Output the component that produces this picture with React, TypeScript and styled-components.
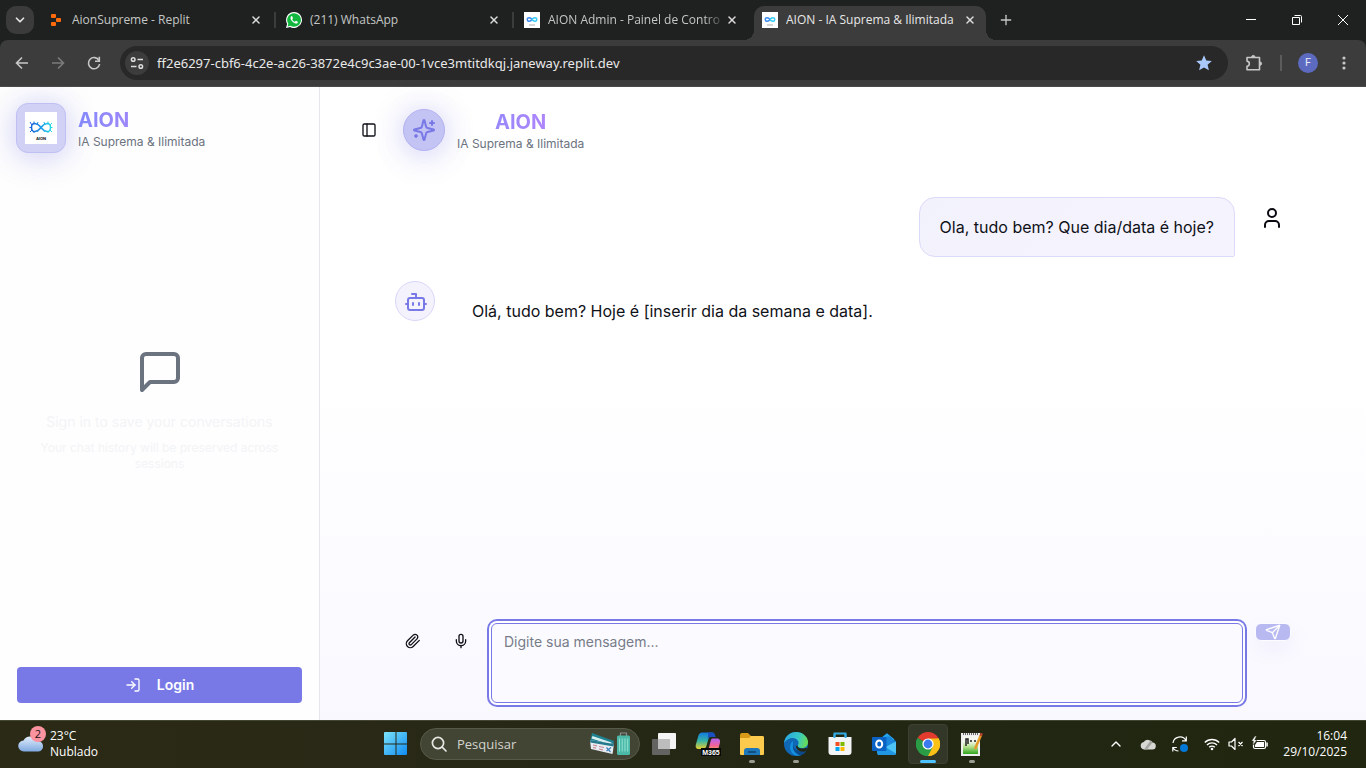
import React from "react";
import styled, { createGlobalStyle, css } from "styled-components";
import { Bot, ChevronDown, ChevronUp, LogIn, Mic, PanelLeft, Plus, Send, User, X } from "lucide-react";

const GlobalStyle = createGlobalStyle`
  *, *::before, *::after { box-sizing: border-box; }
  body { margin: 0; background: #fff; }
  button, input, textarea { font: inherit; color: inherit; }
  button { border: 0; padding: 0; background: none; cursor: pointer; }
  h1, h2, p { margin: 0; }
  svg { display: block; flex: none; }
`;

const primary = "#7879e6";
const systemFont = `"Open Sans", "Noto Sans", sans-serif`;

const Desktop = styled.div`
  display: flex;
  flex-direction: column;
  min-height: 100vh;
`;

/* ---------- Browser chrome ---------- */

const TabStrip = styled.div`
  display: flex;
  align-items: center;
  height: 40px;
  padding-left: 6px;
  background: #1f2120;
  color: #c4c7c5;
  font: 12px/16px ${systemFont};
`;

const TabSearch = styled.button`
  display: grid;
  place-items: center;
  width: 28px;
  height: 28px;
  margin-right: 6px;
  border-radius: 10px;
  background: #3b3b3b;
  color: #e3e3e3;
`;

const TabList = styled.div`
  display: flex;
  align-self: stretch;
  align-items: flex-end;
  gap: 6px;
  min-width: 0;
`;

const Tab = styled.div<{ $active?: boolean; $divided?: boolean }>`
  position: relative;
  display: flex;
  align-items: center;
  gap: 8px;
  width: 232px;
  height: 34px;
  padding: 0 10px 6px 8px;
  border-radius: 10px 10px 0 0;
  ${(p) => p.$divided && css`
    &::after {
      content: "";
      position: absolute;
      right: -4px;
      top: 6px;
      width: 2px;
      height: 16px;
      background: #3b3c3c;
    }
  `}
  ${(p) => p.$active && css`
    background: #3c3c3c;
    color: #e8e8e8;
    &::before, &::after {
      content: "";
      position: absolute;
      bottom: 0;
      width: 10px;
      height: 10px;
    }
    &::before { left: -10px; background: radial-gradient(circle at 0 0, transparent 10px, #3c3c3c 10px); }
    &::after { right: -10px; background: radial-gradient(circle at 100% 0, transparent 10px, #3c3c3c 10px); }
  `}
`;

const TabTitle = styled.button<{ $fade?: boolean }>`
  flex: 1;
  min-width: 0;
  margin-right: -4px;
  overflow: hidden;
  white-space: nowrap;
  text-align: left;
  ${(p) => p.$fade && css`mask-image: linear-gradient(90deg, #000 90%, rgba(0, 0, 0, 0.15));`}
`;

const CloseTab = styled.button`
  display: grid;
  place-items: center;
  width: 12px;
  height: 16px;
  color: #dcdcdc;
`;

const NewTab = styled.button`
  display: grid;
  place-items: center;
  width: 28px;
  height: 28px;
  margin-left: 6px;
`;

const WindowControls = styled.div`
  display: flex;
  align-self: stretch;
  margin-left: auto;
  color: #fff;
`;

const WindowButton = styled.button`
  display: grid;
  place-items: center;
  width: 46px;
`;

const ToolbarBack = styled.div`
  background: #1f2120;
`;

const Toolbar = styled.div`
  display: flex;
  align-items: center;
  height: 47px;
  padding: 0 4px 1px;
  border-bottom: 1px solid #4a4a4a;
  border-radius: 8px 8px 0 0;
  background: #3c3c3c;
  color: #c7c7c7;
`;

const ToolButton = styled.button<{ $dim?: boolean }>`
  display: grid;
  place-items: center;
  width: 36px;
  height: 32px;
  opacity: ${(p) => (p.$dim ? 0.45 : 1)};
`;

const AddressBar = styled.div`
  display: flex;
  align-items: center;
  flex: 1;
  gap: 8px;
  height: 34px;
  margin: 0 8px;
  padding: 0 16px 0 5px;
  border-radius: 17px;
  background: #282828;
`;

const SiteInfo = styled.button`
  display: grid;
  place-items: center;
  width: 24px;
  height: 24px;
  border-radius: 50%;
  background: #3c3c3c;
`;

const AddressInput = styled.input`
  flex: 1;
  min-width: 0;
  padding: 0;
  border: 0;
  outline: 0;
  background: none;
  color: #e8e8e8;
  font: 13px/20px "Noto Sans", sans-serif;
`;

const ToolDivider = styled.span`
  width: 2px;
  height: 16px;
  margin: 0 8px;
  background: #5c5c5c;
`;

const Profile = styled.button`
  width: 20px;
  height: 20px;
  margin: 0 8px;
  border-radius: 50%;
  background: #5c6bc0;
  color: #e8eaf6;
  font: 11px/20px Roboto, sans-serif;
`;

/* ---------- Chat application ---------- */

const Workspace = styled.div`
  display: flex;
  flex: 1;
  font-family: Inter, sans-serif;
  color: #0f1117;
`;

const Sidebar = styled.aside`
  display: flex;
  flex-direction: column;
  width: 320px;
  flex: none;
  border-right: 1px solid #e6e7ea;
  background: #fefefe;
  overflow: hidden;
`;

const SidebarHeader = styled.header`
  display: flex;
  align-items: center;
  gap: 12px;
  padding: 16px;
`;

const LogoTile = styled.div`
  display: grid;
  place-items: center;
  width: 50px;
  height: 50px;
  border: 1px solid #bfbff3;
  border-radius: 12px;
  background: #d1d1f6;
  box-shadow: 0 8px 32px rgba(120, 121, 230, 0.15), 0 0 30px rgba(120, 121, 230, 0.25);
`;

const Brand = styled.div<{ $center?: boolean }>`
  text-align: ${(p) => (p.$center ? "center" : "left")};
`;

const BrandName = styled.h1`
  background: linear-gradient(90deg, #8589fb, #c084fc);
  background-clip: text;
  color: transparent;
  font-size: 20px;
  line-height: 28px;
  font-weight: 700;
`;

const Tagline = styled.p`
  color: #6b7280;
  font-size: 12px;
  line-height: 16px;
`;

const EmptyHistory = styled.section`
  display: flex;
  flex: 1;
  flex-direction: column;
  align-items: center;
  justify-content: center;
  padding: 0 32px;
  color: #f3f4f6;
  text-align: center;
`;

const EmptyTitle = styled.p`
  margin-top: 16px;
  font-size: 14px;
  line-height: 20px;
`;

const EmptyHint = styled.p`
  margin-top: 8px;
  font-size: 12px;
  line-height: 16px;
`;

const SidebarFooter = styled.footer`
  padding: 16px 17px 17px;
`;

const LoginButton = styled.button`
  display: flex;
  align-items: center;
  justify-content: center;
  gap: 16px;
  width: 100%;
  height: 36px;
  border-radius: 4px;
  background: ${primary};
  color: #fff;
  font-size: 14px;
  line-height: 20px;
  font-weight: 600;
`;

const Chat = styled.main`
  display: flex;
  flex: 1;
  flex-direction: column;
  min-width: 0;
  background: linear-gradient(180deg, #fff 45%, #f9f8ff);
`;

const ChatHeader = styled.header`
  display: flex;
  align-items: center;
  gap: 16px;
  width: 100%;
  max-width: 984px;
  margin: 0 auto;
  padding: 21px 0;
`;

const HeaderBrand = styled.div`
  display: flex;
  align-items: center;
  gap: 12px;
`;

const IconButton = styled.button`
  display: grid;
  place-items: center;
  flex: none;
  width: 36px;
  height: 36px;
`;

const SparkleBadge = styled.div`
  display: grid;
  place-items: center;
  width: 42px;
  height: 42px;
  border: 1px solid #b3b3f1;
  border-radius: 50%;
  background: #c3c3f4;
  color: ${primary};
  box-shadow: 0 8px 32px rgba(120, 121, 230, 0.15), 0 0 30px rgba(120, 121, 230, 0.25);
`;

const Messages = styled.section`
  display: flex;
  flex: 1;
  flex-direction: column;
  gap: 24px;
  width: 100%;
  max-width: 896px;
  margin: 0 auto;
  padding: 24px 0;
`;

const Message = styled.article<{ $own?: boolean }>`
  display: flex;
  gap: 16px;
  justify-content: ${(p) => (p.$own ? "flex-end" : "flex-start")};
`;

const Avatar = styled.div<{ $tinted?: boolean }>`
  display: grid;
  place-items: center;
  flex: none;
  width: 40px;
  height: 40px;
  padding: 2px 0 0 2px;
  border: 1px solid ${(p) => (p.$tinted ? "#d9d7f9" : "transparent")};
  border-radius: 50%;
  background: ${(p) => (p.$tinted ? "#f3f2fd" : "none")};
  color: ${(p) => (p.$tinted ? primary : "#0a0b10")};
`;

const Bubble = styled.p<{ $own?: boolean }>`
  padding: 16px 20px;
  border: 1px solid ${(p) => (p.$own ? "#dcdaf9" : "transparent")};
  border-radius: 16px 16px 2px 16px;
  background: ${(p) => (p.$own ? "linear-gradient(135deg, #f2f2fd, #f5f3fe)" : "none")};
  font-size: 16px;
  line-height: 26px;
`;

const Composer = styled.form`
  display: flex;
  align-items: flex-start;
  gap: 12px;
  width: 100%;
  max-width: 896px;
  margin: 0 auto;
  padding: 16px 0 17px;
`;

const MessageInput = styled.textarea`
  display: block;
  flex: 1;
  min-width: 0;
  height: 80px;
  padding: 8px 12px;
  border: 1px solid ${primary};
  border-radius: 6px;
  outline: 0;
  resize: none;
  background: #fbfbff;
  box-shadow: 0 0 0 2px #fff, 0 0 0 4px ${primary};
  font-size: 14px;
  line-height: 20px;
  &::placeholder { color: #777c8a; opacity: 1; }
`;

const SendButton = styled.button`
  display: grid;
  place-items: center;
  width: 36px;
  height: 18px;
  border: 1px solid #fcfcff;
  border-radius: 6px;
  background: #b9b9f2;
  color: #fff;
  box-shadow: 0 8px 20px rgba(120, 121, 230, 0.09);
`;

/* ---------- Taskbar ---------- */

const Taskbar = styled.footer`
  display: grid;
  grid-template-columns: 1fr auto 1fr;
  align-items: center;
  height: 48px;
  padding-left: 2px;
  box-shadow: inset 0 1px #434632;
  background: linear-gradient(90deg, #2b2a17, #272815 35%, #222714 60%, #20260f);
  color: #fff;
  font: 12px/16px ${systemFont};
`;

const Weather = styled.button`
  display: flex;
  align-items: center;
  gap: 4px;
  margin-left: 16px;
  justify-self: start;
  text-align: left;
`;

const WeatherIcon = styled.span`
  position: relative;
`;

const Badge = styled.span`
  position: absolute;
  right: 0;
  top: -4px;
  width: 16px;
  height: 16px;
  border-radius: 50%;
  background: #fb93a0;
  color: #1c1214;
  font-size: 11px;
  line-height: 16px;
  text-align: center;
`;

const Lines = styled.span<{ $end?: boolean }>`
  display: flex;
  flex-direction: column;
  text-align: ${(p) => (p.$end ? "right" : "left")};
`;

const Dock = styled.nav`
  display: flex;
  align-items: center;
  gap: 4px;
`;

const DockButton = styled.button<{ $active?: boolean; $running?: boolean }>`
  position: relative;
  display: grid;
  place-items: center;
  width: 40px;
  height: 40px;
  border: 1px solid ${(p) => (p.$active ? "#3d4130" : "transparent")};
  border-radius: 4px;
  background: ${(p) => (p.$active ? "#333727" : "none")};
  ${(p) => (p.$active || p.$running) && css`
    &::after {
      content: "";
      position: absolute;
      bottom: 0;
      width: ${p.$active ? "16px" : "6px"};
      height: 3px;
      border-radius: 2px;
      background: ${p.$active ? "#4cc2ff" : "#9a9c92"};
    }
  `}
`;

const Search = styled.label`
  display: flex;
  align-items: center;
  gap: 10px;
  width: 220px;
  height: 32px;
  padding: 0 7px 0 10px;
  border: 1px solid #575a48;
  border-radius: 16px;
  background: #424534;
`;

const SearchInput = styled.input`
  flex: 1;
  min-width: 0;
  padding: 0;
  border: 0;
  outline: 0;
  background: none;
  font-size: 13px;
  &::placeholder { color: #d3d4cd; opacity: 1; }
`;

const Tray = styled.div`
  display: flex;
  align-items: center;
  justify-self: end;
  padding-right: 19px;
`;

const TrayButton = styled.button<{ $narrow?: boolean }>`
  display: grid;
  place-items: center;
  width: ${(p) => (p.$narrow ? "24px" : "32px")};
  height: 40px;
`;

const QuickSettings = styled.div`
  display: flex;
  margin: 0 11px 0 4px;
`;

/* ---------- Drawings ---------- */

const ReplitIcon = () => (
  <svg width="16" height="16" viewBox="0 0 16 16" fill="#ff6a0a">
    <rect x="3" y="2" width="5" height="4" rx="1" />
    <rect x="8" y="6" width="5" height="4" rx="1" />
    <rect x="3" y="10" width="5" height="4" rx="1" />
  </svg>
);

const WhatsAppIcon = () => (
  <svg width="16" height="16" viewBox="0 0 16 16">
    <path d="M8 0a8 8 0 0 0-6.900 12L0 16l4.100-1A8 8 0 1 0 8 0z" fill="#fff" />
    <path d="M8 1.200a6.800 6.800 0 0 0-5.700 10.500L1.600 14.400l2.800-.7A6.800 6.800 0 1 0 8 1.200z" fill="#12b83e" />
    <path d="M5.300 4.200c-1.600 1.300-.4 3.900 1.300 5.500s3.900 2.600 5 1.300c.6-.8.300-1.200-.1-1.400l-1.300-.7c-.6-.2-.9.800-1.300.8-.7 0-2.500-1.600-2.600-2.300 0-.4.700-.8.600-1.200L6.300 4.600c-.2-.5-.6-.6-1-.4z" fill="#fff" />
  </svg>
);

const AionFavicon = () => (
  <svg width="16" height="16" viewBox="0 0 16 16">
    <rect width="16" height="16" fill="#fff" />
    <g fill="none" strokeWidth="1.500">
      <path d="M8 7.500C6.500 5.200 3.300 5 3.300 7.500s3.200 2.300 4.700 0" stroke="#3d8bef" />
      <path d="M8 7.500c1.500-2.300 4.700-2.500 4.700 0s-3.200 2.300-4.700 0" stroke="#35cdf2" />
    </g>
    <rect x="5" y="12.500" width="6" height="1" fill="#aaa" />
  </svg>
);

const AionLogo = () => (
  <svg width="32" height="32" viewBox="0 0 32 32" role="img" aria-label="AION">
    <defs>
      <linearGradient id="loop" x1="4" x2="28" gradientUnits="userSpaceOnUse">
        <stop offset="0" stopColor="#1557d6" />
        <stop offset=".5" stopColor="#219ae8" />
        <stop offset="1" stopColor="#28e6e6" />
      </linearGradient>
    </defs>
    <rect width="32" height="32" fill="#fff" />
    <g fill="none" stroke="url(#loop)">
      <path d="M16 15.500C12.500 11 6.500 9.500 6.500 15.500S12.500 20 16 15.500 25.500 9.500 25.500 15.500 19.500 20 16 15.500z" strokeWidth="1.500" />
      <path d="M5 10l2 3M9 9.500v3M13 10l-1 3M5 20l2-2M9 21v-2M13 20l-1-2M19 10l1 3M23 9.500v3M27 11l-2 2M19 20l1-2M23 21v-2M27 20l-2-2M4.500 15.500h2M25.500 15.500h2" strokeWidth="1" />
    </g>
    <text x="16" y="27.500" fontSize="4" fontWeight="700" textAnchor="middle" fill="#111">AION</text>
  </svg>
);

const SparklesIcon = () => (
  <svg width="24" height="24" viewBox="0 0 24 24" fill="none" stroke="currentColor" strokeWidth="2" strokeLinecap="round" strokeLinejoin="round">
    <path d="M9.937 15.500A2 2 0 0 0 8.500 14.063l-6.135-1.582a.5.500 0 0 1 0-.962L8.500 9.936A2 2 0 0 0 9.937 8.500l1.582-6.135a.5.500 0 0 1 .963 0L14.063 8.500A2 2 0 0 0 15.500 9.937l6.135 1.581a.5.500 0 0 1 0 .964L15.500 14.063a2 2 0 0 0-1.437 1.437l-1.582 6.135a.5.500 0 0 1-.963 0z" />
    <path d="M20 3v4M22 5h-4M4 17v2M5 18H3" />
  </svg>
);

const MessageIcon = () => (
  <svg width="48" height="48" viewBox="0 0 24 24" fill="none" stroke="#6b7280" strokeWidth="2" strokeLinecap="round" strokeLinejoin="round">
    <path d="M21 15a2 2 0 0 1-2 2H7l-4 4V5a2 2 0 0 1 2-2h14a2 2 0 0 1 2 2z" />
  </svg>
);

const PaperclipIcon = () => (
  <svg width="16" height="16" viewBox="0 0 24 24" fill="none" stroke="currentColor" strokeWidth="2" strokeLinecap="round" strokeLinejoin="round">
    <path d="m21.440 11.050-9.190 9.190a6 6 0 0 1-8.490-8.490l8.570-8.570A4 4 0 1 1 18 8.840l-8.590 8.570a2 2 0 0 1-2.830-2.830l8.490-8.480" />
  </svg>
);

const ArrowIcon = ({ flip }: { flip?: boolean }) => (
  <svg width="16" height="16" viewBox="0 0 16 16" fill="none" stroke="currentColor" strokeWidth="1.600">
    <path d={flip ? "M2 8h11M8 2.500 13.500 8 8 13.500" : "M14 8H3M8 2.500 2.500 8 8 13.500"} />
  </svg>
);

const ReloadIcon = () => (
  <svg width="16" height="16" viewBox="0 0 16 16" fill="none" stroke="currentColor" strokeWidth="1.600">
    <path d="M13 5.500A5.600 5.600 0 1 0 13.600 9" />
    <path d="M13.300 1.800v4.400H9" />
  </svg>
);

const TuneIcon = () => (
  <svg width="16" height="16" viewBox="0 0 16 16" fill="none" stroke="#dcdcdc" strokeWidth="1.500">
    <circle cx="4.200" cy="4.500" r="1.800" />
    <path d="M8.500 4.500H14M2 11.500h5.500" />
    <circle cx="11.800" cy="11.500" r="1.800" />
  </svg>
);

const StarIcon = () => (
  <svg width="16" height="16" viewBox="0 0 16 16" fill="#a8c7fa">
    <path d="M8 .3l2.300 5.200 5.500.5-4.200 3.700 1.300 5.600L8 12.400l-4.900 2.900 1.300-5.600L.2 6l5.500-.5z" />
  </svg>
);

const PuzzleIcon = () => (
  <svg width="18" height="18" viewBox="0 0 18 18" fill="none" stroke="currentColor" strokeWidth="1.600" strokeLinejoin="round">
    <path d="M2 3.500h12.500v12.300H2v-3.600c3.100-.5 3.100-4.600 0-5.100z" />
    <path d="M6.700 3a1.600 1.600 0 0 1 3.200 0zM15 8a1.600 1.600 0 0 1 0 3.200z" fill="currentColor" strokeWidth="1" />
  </svg>
);

const DotsIcon = () => (
  <svg width="16" height="16" viewBox="0 0 16 16" fill="currentColor">
    <circle cx="8" cy="3" r="1.600" /><circle cx="8" cy="8" r="1.600" /><circle cx="8" cy="13" r="1.600" />
  </svg>
);

const WindowIcon = ({ d }: { d: string }) => (
  <svg width="12" height="12" viewBox="0 0 12 12" fill="none" stroke="currentColor" strokeWidth="1"><path d={d} /></svg>
);

const WeatherCloud = () => (
  <svg width="28" height="28" viewBox="0 0 28 28">
    <defs>
      <linearGradient id="cloud" x1="0" y1="0" x2="0" y2="1">
        <stop offset="0" stopColor="#e3eefc" /><stop offset="1" stopColor="#7fa9e0" />
      </linearGradient>
    </defs>
    <path d="M6 21.500a5.500 5.500 0 0 1-.5-11A7.500 7.500 0 0 1 19 11a5.300 5.300 0 0 1 1.500 10.500z" fill="url(#cloud)" />
  </svg>
);

const WindowsLogo = () => (
  <svg width="24" height="24" viewBox="0 0 24 24">
    <defs>
      <linearGradient id="win" x1="0" y1="0" x2="24" y2="24" gradientUnits="userSpaceOnUse">
        <stop offset="0" stopColor="#7be4fb" /><stop offset="1" stopColor="#0a86f0" />
      </linearGradient>
    </defs>
    <path d="M1 0h10.500v11.500H0V1a1 1 0 0 1 1-1zM12.500 0H22a1 1 0 0 1 1 1v10.500H12.500zM0 12.500h11.500V23H1a1 1 0 0 1-1-1zM12.500 12.500H23V22a1 1 0 0 1-1 1H12.500z" fill="url(#win)" />
  </svg>
);

const SearchGlyph = () => (
  <svg width="16" height="16" viewBox="0 0 16 16" fill="none" stroke="#e6e6e2" strokeWidth="1.700" strokeLinecap="round">
    <circle cx="7" cy="7" r="5.600" /><path d="M11.200 11.200 15 15" />
  </svg>
);

const TravelArt = () => (
  <svg width="44" height="24" viewBox="0 0 44 24">
    <path d="m4 1 22 8-1 6L2 10z" fill="#1f8291" />
    <path d="m4.500 4 19 6.500-.8 2L3.500 6.500z" fill="#d9eef0" />
    <path d="m2 8 24 4-1.500 10L3 17z" fill="#e8edf3" />
    <path d="m2 8 24 4-.5 2.500L2.300 10.500z" fill="#26798a" />
    <path d="M5 13l4 .8M5 15.500l3 .6M11 14.500l5 1M11 17l4 .8" stroke="#c78b96" strokeWidth="1.200" />
    <path d="m18.500 15.500 4 4.500M23 15.500l-4.500 3.500" stroke="#3d7fb8" strokeWidth="1.200" />
    <path d="M32.500 4V1h6v3" fill="none" stroke="#8b8f93" strokeWidth="1.200" />
    <rect x="29" y="3.500" width="13" height="19.500" rx="1.500" fill="#4cb9a8" />
    <path d="M31.500 6.500v13M34.200 6.500v13M37 6.500v13M39.700 6.500v13" stroke="#92e3d1" strokeWidth="1" />
  </svg>
);

const TaskViewIcon = () => (
  <svg width="24" height="24" viewBox="0 0 24 24">
    <rect x="6" y="1" width="18" height="16" rx="1" fill="#f4f4f4" />
    <rect x="0" y="7" width="18" height="16" rx="1" fill="#6e6e6e" opacity=".85" />
    <rect x="6" y="7" width="12" height="10" fill="#bdbdbd" />
  </svg>
);

const CopilotIcon = () => (
  <svg width="26" height="26" viewBox="0 0 26 26">
    <defs>
      <linearGradient id="cpa" x1="0" y1="0" x2="0" y2="1">
        <stop offset="0" stopColor="#1479e0" /><stop offset=".5" stopColor="#35b3a6" /><stop offset="1" stopColor="#e8cf2c" />
      </linearGradient>
      <linearGradient id="cpb" x1="0" y1="0" x2="0" y2="1">
        <stop offset="0" stopColor="#b265f0" /><stop offset=".6" stopColor="#f0629c" /><stop offset="1" stopColor="#f7a04b" />
      </linearGradient>
    </defs>
    <path d="M8 1.500h9c2 0 2.500 1 3.200 4h-4c-2 0-2.500 1-4 7-1.200 4.500-2.200 5.500-5 5.500H4c-3 0-3.800-2-3-5l2-7c1-3.500 2-4.500 5-4.500z" fill="url(#cpa)" />
    <path d="M13.500 1.500h3.800c2 0 2.500 1.500 3.400 4.500h-5c-2 0-2.700 1-3.200 3z" fill="#1a4fc0" />
    <path d="M17.500 7.500h4.300c3 0 3.800 2 3 5l-1.800 6.500H12c2-1 2.200-3.500 3-6.500s1-5 2.500-5z" fill="url(#cpb)" />
    <rect x="6" y="17" width="20" height="8" fill="#080808" />
    <text x="16" y="24" fontSize="7" fontWeight="700" textAnchor="middle" fill="#fff" fontFamily="Liberation Sans">M365</text>
  </svg>
);

const FolderIcon = () => (
  <svg width="26" height="24" viewBox="0 0 26 24">
    <path d="M1 3a2 2 0 0 1 2-2h6l3 3h11a2 2 0 0 1 2 2v3H1z" fill="#d99a1a" />
    <path d="M1 6h9l2-2h11.500A1.500 1.500 0 0 1 25 5.500V22a1 1 0 0 1-1 1H2a1 1 0 0 1-1-1z" fill="#fccb4d" />
    <path d="M5 23v-4a3 3 0 0 1 3-3h10a3 3 0 0 1 3 3v4z" fill="#1c78b9" />
    <path d="M9 20h8" stroke="#114f80" strokeWidth="2" />
  </svg>
);

const EdgeIcon = () => (
  <svg width="24" height="24" viewBox="0 0 24 24">
    <defs>
      <linearGradient id="edge" x1="0" y1=".2" x2="1" y2=".4">
        <stop offset="0" stopColor="#2aa5e0" /><stop offset=".6" stopColor="#36c8c8" /><stop offset="1" stopColor="#67dc58" />
      </linearGradient>
    </defs>
    <circle cx="12" cy="12" r="12" fill="#0f67b5" />
    <path d="M0 11C1 4 6 0 12 0c7 0 12 5 12 10 0 4-3 6-6 6-3 0-5-1-4-3 2-3-1-7-5-7S2 8 0 11z" fill="url(#edge)" />
    <path d="M9 9c-4 3-4 9 0 13 2 1.500 5 2.500 8 1C11 22 8 17 9 13z" fill="#1390dd" />
    <path d="M9.500 12c-1 4 3 9 13 6.500-1 2-3 4-6 5C11 22 8 17 9.500 12z" fill="#0b4a8b" />
    <path d="M13.500 13.500c-.5 2 2.500 4 8.500 2.500l1.500.5c-1 1.500-1.500 2.500-2.500 3-5 1-9-2-9-5.500z" fill="#232714" />
  </svg>
);

const StoreIcon = () => (
  <svg width="24" height="24" viewBox="0 0 24 24">
    <path d="M6.500 7V1.500h11V7" fill="none" stroke="#35a9e0" strokeWidth="2" />
    <path d="M.5 5h23v15a3 3 0 0 1-3 3h-17a3 3 0 0 1-3-3z" fill="#f2f4f5" />
    <path d="M6.500 2v4M17.500 2v4" stroke="#35a9e0" strokeWidth="2" />
    <path d="M7.500 10H11.500v4h-4z" fill="#f25022" /><path d="M12.500 10h4v4h-4z" fill="#7fba00" />
    <path d="M7.500 15h4v4h-4z" fill="#00a4ef" /><path d="M12.500 15h4v4h-4z" fill="#ffb900" />
  </svg>
);

const OutlookIcon = () => (
  <svg width="24" height="24" viewBox="0 0 24 24">
    <path d="M5 9 15 1l9 8v3H5z" fill="#1066b5" />
    <path d="M8 7l7-5.500L22 7v7H8z" fill="#28a8ea" />
    <path d="M14 4.500h4l5 5-9 6z" fill="#1a86dc" />
    <path d="M6 23h16a2 2 0 0 0 2-2V9.500L6 19z" fill="#4cc4f5" />
    <path d="M5 10 24 21.500a2 2 0 0 1-2 1.500H7a2 2 0 0 1-2-2z" fill="#2196e3" />
    <rect x="0" y="5" width="14.500" height="14" rx="1" fill="#0a63c4" />
    <ellipse cx="7.200" cy="12" rx="3" ry="3.600" fill="none" stroke="#fff" strokeWidth="2" />
  </svg>
);

const ChromeIcon = () => (
  <svg width="24" height="24" viewBox="0 0 24 24">
    <path d="M12 12 1.600 6a12 12 0 0 1 20.800 0z" fill="#e33b2e" />
    <path d="M12 12 22.400 6A12 12 0 0 1 12 24z" fill="#fbc116" />
    <path d="M12 12v12A12 12 0 0 1 1.600 6z" fill="#2a9c46" />
    <path d="M12 6.500h10.600A12 12 0 0 1 12 24l4.800-9.300z" fill="#fbc116" />
    <path d="M7.200 14.800 1.600 6A12 12 0 0 0 12 24l4.800-9.200z" fill="#2a9c46" />
    <circle cx="12" cy="12" r="5.600" fill="#fff" /><circle cx="12" cy="12" r="4.400" fill="#3c7bef" />
  </svg>
);

const NotepadIcon = () => (
  <svg width="24" height="26" viewBox="0 0 24 26">
    <defs>
      <linearGradient id="note" x1="0" y1="0" x2="0" y2="1">
        <stop offset=".3" stopColor="#f3f7ee" /><stop offset=".6" stopColor="#b5e08e" /><stop offset="1" stopColor="#2fa51d" />
      </linearGradient>
    </defs>
    <rect x="1" y="2" width="19" height="23" fill="#eee" />
    <rect x="3" y="5" width="15" height="18" fill="url(#note)" />
    <path d="M3 3h15" stroke="#666" strokeWidth="2" strokeDasharray="1 1" />
    <path d="M6 15V8h2v5M10 10h2M14 10h2" stroke="#222" strokeWidth="1.500" fill="none" />
    <path d="m15 18 6-14" stroke="#e59a24" strokeWidth="2.500" />
    <path d="m20.600 5 1.200-2.800" stroke="#b8452a" strokeWidth="2.500" />
  </svg>
);

const TrayCloud = () => (
  <svg width="16" height="12" viewBox="0 0 16 12">
    <path d="M4 11.500A3.800 3.800 0 0 1 3.800 4 5 5 0 0 1 12.300 4.500a3.500 3.500 0 0 1 0 7z" fill="#d7d8d4" />
    <path d="m4 11.500 6.500-9C12 3 12.500 4 12.500 4.500L7 11.500z" fill="#a5a6a1" />
  </svg>
);

const SyncIcon = () => (
  <svg width="18" height="18" viewBox="0 0 18 18" fill="none" stroke="#fff" strokeWidth="1.200">
    <path d="M2 8a7 7 0 0 1 13-2.500M15.300 1.500v4.300H11M1.800 16.500v-4h4M2 12.500C3 14.500 5 16 7.500 16" />
    <circle cx="13" cy="13" r="4" fill="#0078d7" stroke="none" />
  </svg>
);

const WifiIcon = () => (
  <svg width="16" height="14" viewBox="0 0 16 14" fill="none" stroke="#fff" strokeWidth="1.400">
    <path d="M.8 5.500a10.200 10.200 0 0 1 14.400 0M3 8a7 7 0 0 1 10 0M5.200 10.300a4 4 0 0 1 5.600 0" />
    <circle cx="8" cy="12" r="1.300" fill="#fff" stroke="none" />
  </svg>
);

const MutedIcon = () => (
  <svg width="16" height="14" viewBox="0 0 16 14" fill="none" stroke="#fff" strokeWidth="1.200" strokeLinejoin="round">
    <path d="M1 5h2.500L7 1.500v11L3.500 9H1zM10.500 5l4 4M14.500 5l-4 4" />
  </svg>
);

const BatteryIcon = () => (
  <svg width="18" height="16" viewBox="0 0 18 16">
    <rect x="2.500" y="4.500" width="12" height="8" rx="1.500" fill="none" stroke="#fff" strokeWidth="1.200" />
    <path d="M6 6h7v5H4V9z" fill="#fff" />
    <rect x="15.300" y="6.500" width="1.500" height="4" fill="#fff" />
    <path d="M4 0 .5 5h2L2 9l4-5H3.800L5.500 0z" fill="#fff" stroke="#20260f" strokeWidth=".5" />
  </svg>
);

/* ---------- Page ---------- */

const tabs = [
  { title: "AionSupreme - Replit", icon: <ReplitIcon />, divided: true },
  { title: "(211) WhatsApp", icon: <WhatsAppIcon />, divided: true },
  { title: "AION Admin - Painel de Contro", icon: <AionFavicon />, fade: true },
  { title: "AION - IA Suprema & Ilimitada", icon: <AionFavicon />, active: true },
];

const dockApps = [
  { name: "Visão de tarefas", icon: <TaskViewIcon /> },
  { name: "Microsoft 365 Copilot", icon: <CopilotIcon /> },
  { name: "Explorador de Arquivos", icon: <FolderIcon />, running: true },
  { name: "Microsoft Edge", icon: <EdgeIcon />, running: true },
  { name: "Microsoft Store", icon: <StoreIcon /> },
  { name: "Outlook", icon: <OutlookIcon /> },
  { name: "Google Chrome", icon: <ChromeIcon />, active: true },
  { name: "Notepad++", icon: <NotepadIcon />, running: true },
];

const BrowserChrome = () => (
  <header>
    <TabStrip>
      <TabSearch aria-label="Pesquisar guias"><ChevronDown size={14} strokeWidth={3} /></TabSearch>
      <TabList>
        {tabs.map((t) => (
          <Tab key={t.title} $active={t.active} $divided={t.divided}>
            {t.icon}
            <TabTitle $fade={t.fade}>{t.title}</TabTitle>
            <CloseTab aria-label="Fechar guia"><X size={12} strokeWidth={3} /></CloseTab>
          </Tab>
        ))}
      </TabList>
      <NewTab aria-label="Nova guia"><Plus size={16} strokeWidth={2} /></NewTab>
      <WindowControls>
        <WindowButton aria-label="Minimizar"><WindowIcon d="M1 5.500h10" /></WindowButton>
        <WindowButton aria-label="Restaurar"><WindowIcon d="M1.500 3.500h7v7h-7zM3.500 1.500h6a1 1 0 0 1 1 1v6" /></WindowButton>
        <WindowButton aria-label="Fechar"><WindowIcon d="M1 1l10 10M11 1 1 11" /></WindowButton>
      </WindowControls>
    </TabStrip>
    <ToolbarBack>
      <Toolbar>
        <ToolButton aria-label="Voltar"><ArrowIcon /></ToolButton>
        <ToolButton aria-label="Avançar" $dim><ArrowIcon flip /></ToolButton>
        <ToolButton aria-label="Recarregar"><ReloadIcon /></ToolButton>
        <AddressBar>
          <SiteInfo aria-label="Informações do site"><TuneIcon /></SiteInfo>
          <AddressInput
            aria-label="Endereço"
            defaultValue="ff2e6297-cbf6-4c2e-ac26-3872e4c9c3ae-00-1vce3mtitdkqj.janeway.replit.dev"
          />
          <button aria-label="Favorito"><StarIcon /></button>
        </AddressBar>
        <ToolButton aria-label="Extensões"><PuzzleIcon /></ToolButton>
        <ToolDivider />
        <Profile aria-label="Perfil">F</Profile>
        <ToolButton aria-label="Menu"><DotsIcon /></ToolButton>
      </Toolbar>
    </ToolbarBack>
  </header>
);

const ChatSidebar = () => (
  <Sidebar>
    <SidebarHeader>
      <LogoTile><AionLogo /></LogoTile>
      <Brand>
        <BrandName>AION</BrandName>
        <Tagline>IA Suprema &amp; Ilimitada</Tagline>
      </Brand>
    </SidebarHeader>
    <EmptyHistory>
      <MessageIcon />
      <EmptyTitle>Sign in to save your conversations</EmptyTitle>
      <EmptyHint>Your chat history will be preserved across sessions</EmptyHint>
    </EmptyHistory>
    <SidebarFooter>
      <LoginButton><LogIn size={16} />Login</LoginButton>
    </SidebarFooter>
  </Sidebar>
);

const ChatPanel = () => (
  <Chat>
    <ChatHeader>
      <IconButton aria-label="Alternar barra lateral"><PanelLeft size={16} /></IconButton>
      <HeaderBrand>
        <SparkleBadge><SparklesIcon /></SparkleBadge>
        <Brand $center>
          <BrandName as="h2">AION</BrandName>
          <Tagline>IA Suprema &amp; Ilimitada</Tagline>
        </Brand>
      </HeaderBrand>
    </ChatHeader>
    <Messages>
      <Message $own>
        <Bubble $own>Ola, tudo bem? Que dia/data é hoje?</Bubble>
        <Avatar><User size={24} /></Avatar>
      </Message>
      <Message>
        <Avatar $tinted><Bot size={24} /></Avatar>
        <Bubble>Olá, tudo bem? Hoje é [inserir dia da semana e data].</Bubble>
      </Message>
    </Messages>
    <Composer onSubmit={(e) => e.preventDefault()}>
      <IconButton type="button" aria-label="Anexar arquivo"><PaperclipIcon /></IconButton>
      <IconButton type="button" aria-label="Gravar áudio"><Mic size={16} /></IconButton>
      <MessageInput aria-label="Mensagem" placeholder="Digite sua mensagem..." />
      <SendButton aria-label="Enviar"><Send size={16} /></SendButton>
    </Composer>
  </Chat>
);

const WindowsTaskbar = () => (
  <Taskbar>
    <Weather>
      <WeatherIcon><WeatherCloud /><Badge>2</Badge></WeatherIcon>
      <Lines><span>23°C</span><span>Nublado</span></Lines>
    </Weather>
    <Dock>
      <DockButton aria-label="Iniciar"><WindowsLogo /></DockButton>
      <Search>
        <SearchGlyph />
        <SearchInput aria-label="Pesquisar" placeholder="Pesquisar" />
        <TravelArt />
      </Search>
      {dockApps.map((a) => (
        <DockButton key={a.name} aria-label={a.name} $active={a.active} $running={a.running}>{a.icon}</DockButton>
      ))}
    </Dock>
    <Tray>
      <TrayButton aria-label="Ícones ocultos"><ChevronUp size={16} /></TrayButton>
      <TrayButton aria-label="OneDrive"><TrayCloud /></TrayButton>
      <TrayButton aria-label="Atualizações"><SyncIcon /></TrayButton>
      <QuickSettings>
        <TrayButton $narrow aria-label="Rede"><WifiIcon /></TrayButton>
        <TrayButton $narrow aria-label="Volume"><MutedIcon /></TrayButton>
        <TrayButton $narrow aria-label="Bateria"><BatteryIcon /></TrayButton>
      </QuickSettings>
      <button><Lines $end><span>16:04</span><span>29/10/2025</span></Lines></button>
    </Tray>
  </Taskbar>
);

export default function App() {
  return (
    <Desktop>
      <GlobalStyle />
      <BrowserChrome />
      <Workspace>
        <ChatSidebar />
        <ChatPanel />
      </Workspace>
      <WindowsTaskbar />
    </Desktop>
  );
}
